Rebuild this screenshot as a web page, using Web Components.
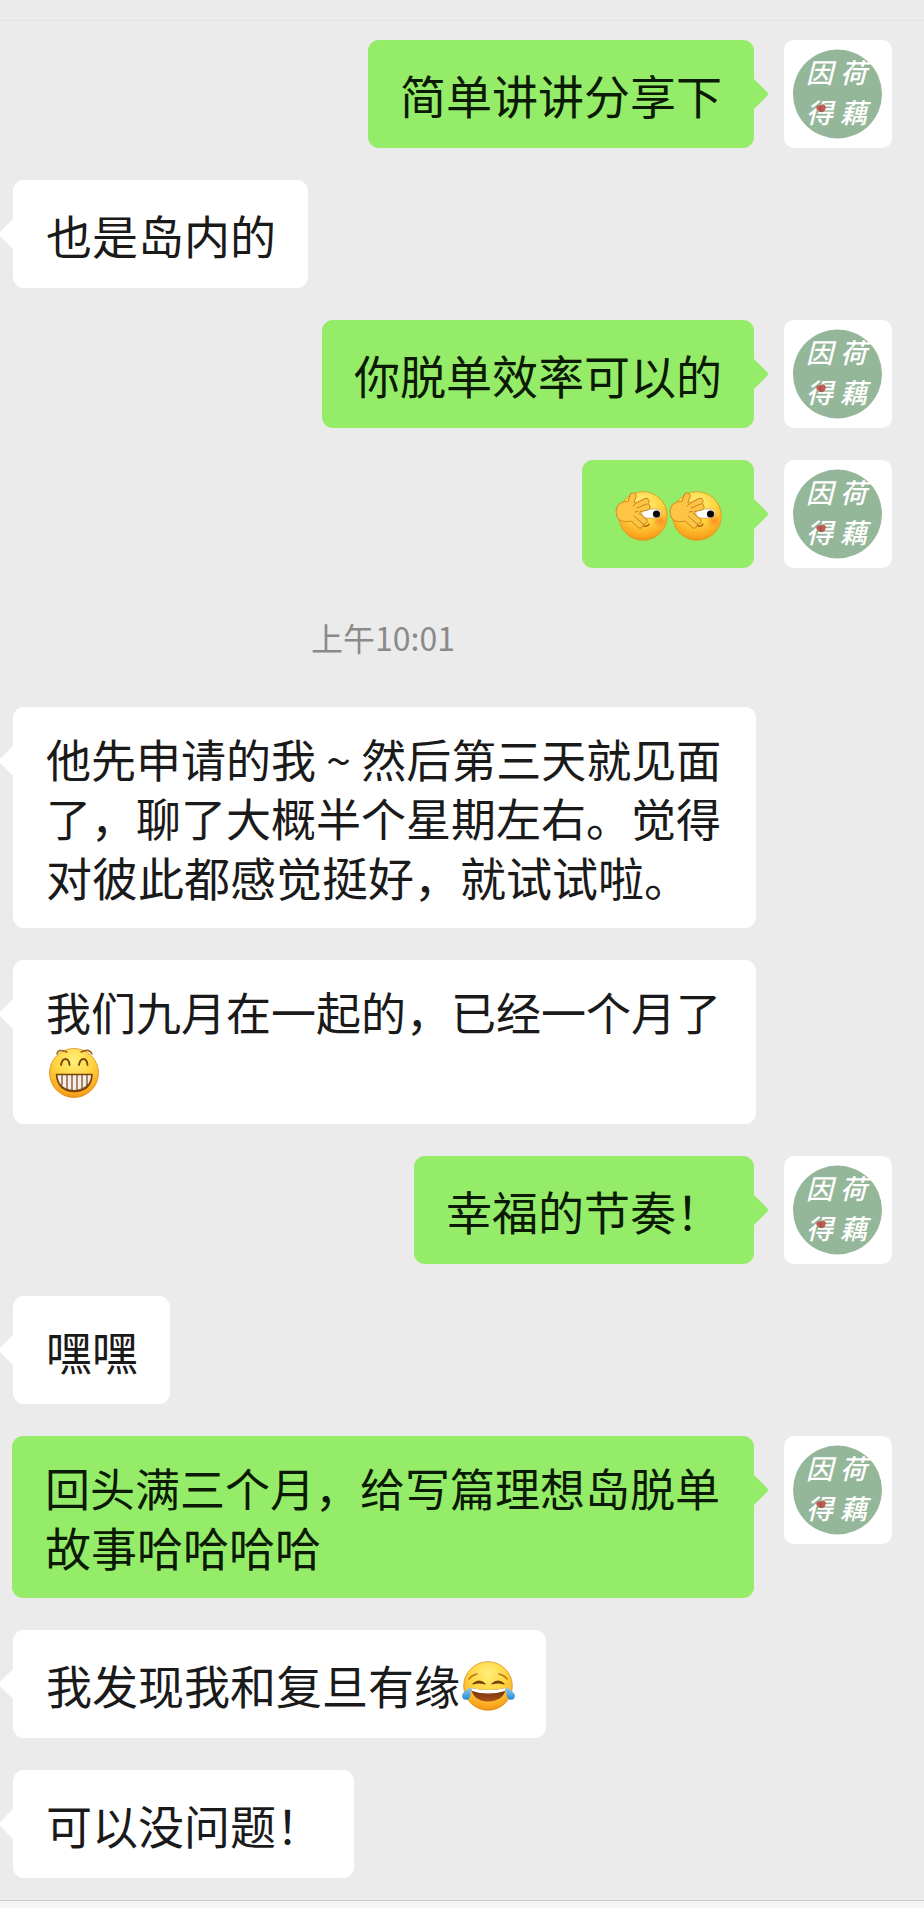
<!DOCTYPE html>
<html lang="zh-CN">
<head>
<meta charset="utf-8">
<meta name="viewport" content="width=device-width, initial-scale=1">
<title>聊天</title>
<style>
  body { margin: 0; background: #ebebeb; font-family: "Noto Sans CJK SC", sans-serif; }
</style>
</head>
<body>
<chat-page>
  <chat-message from="me"><chat-line>简单讲讲分享下</chat-line></chat-message>
  <chat-message><chat-line>也是岛内的</chat-line></chat-message>
  <chat-message from="me"><chat-line>你脱单效率可以的</chat-line></chat-message>
  <chat-message from="me"><chat-line><chat-emoji name="peek"></chat-emoji><chat-emoji name="peek"></chat-emoji></chat-line></chat-message>
  <chat-time>上午10:01</chat-time>
  <chat-message wide>
    <chat-line full>他先申请的我 ~ 然后第三天就见面</chat-line>
    <chat-line full>了，聊了大概半个星期左右。觉得</chat-line>
    <chat-line>对彼此都感觉挺好，就试试啦。</chat-line>
  </chat-message>
  <chat-message wide>
    <chat-line full>我们九月在一起的，已经一个月了</chat-line>
    <chat-line><chat-emoji name="grin"></chat-emoji></chat-line>
  </chat-message>
  <chat-message from="me"><chat-line>幸福的节奏！</chat-line></chat-message>
  <chat-message><chat-line>嘿嘿</chat-line></chat-message>
  <chat-message from="me" wide>
    <chat-line full>回头满三个月，给写篇理想岛脱单</chat-line>
    <chat-line>故事哈哈哈哈</chat-line>
  </chat-message>
  <chat-message><chat-line>我发现我和复旦有缘<chat-emoji name="joy"></chat-emoji></chat-line></chat-message>
  <chat-message><chat-line>可以没问题！</chat-line></chat-message>
</chat-page>

<script>
const define = (name, html, setup) => customElements.define(name, class extends HTMLElement {
  connectedCallback() {
    if (this.shadowRoot) return;
    const root = this.attachShadow({ mode: 'open' });
    const template = document.createElement('template');
    template.innerHTML = html;
    root.append(template.content.cloneNode(true));
    if (setup) setup(this, root);
  }
});

define('chat-page', `
  <style>
    :host { display: flex; flex-direction: column; min-height: 100vh; background: #ebebeb; }
    header { height: 20px; border-bottom: 1px solid #e3e3e3; }
    main { display: flex; flex-direction: column; gap: 32px; padding: 19px 32px 22px 12px; }
    footer { flex: 1; min-height: 7px; border-top: 1px solid #cdcdcd; background: #f5f5f5; }
  </style>
  <header></header>
  <main><slot></slot></main>
  <footer></footer>`);

define('chat-time', `
  <style>
    :host { display: block; padding-right: 138px; text-align: center; font-size: 32px; line-height: 75px; color: #8a8a8a; }
  </style>
  <slot></slot>`);

define('chat-line', `
  <style>
    :host { display: flex; align-items: center; min-height: 59px; font-size: 46px; line-height: 59px; }
    :host([full]) { font-size: 45px; }
  </style>
  <slot></slot>`);

define('chat-message', `
  <style>
    :host { display: flex; align-items: flex-start; gap: 30px; padding: 0 136px 0 1px; color: #1a1a1a; --bubble: #fff; }
    :host([from="me"]) { justify-content: flex-end; padding: 0; color: #0a1a05; --bubble: #95ec69; }
    .bubble {
      position: relative; box-sizing: border-box; min-height: 108px; padding: 22px 32px 22px 33px;
      display: flex; flex-direction: column; justify-content: center;
      border-radius: 11px; background: var(--bubble);
    }
    :host([from="me"]) .bubble { padding-left: 32px; }
    :host([wide]) .bubble { flex: 1; padding-left: 33px; }
    .tail { position: absolute; top: 39px; right: 100%; width: 14px; height: 30px; fill: var(--bubble); }
    :host([from="me"]) .tail { right: auto; left: 100%; }
    chat-avatar { display: none; }
    :host([from="me"]) chat-avatar { display: block; }
  </style>
  <div class="bubble">
    <svg class="tail" viewBox="0 0 14 30" aria-hidden="true"><path/></svg>
    <slot></slot>
  </div>
  <chat-avatar></chat-avatar>`, (host, root) => {
    root.querySelector('path').setAttribute('d', host.getAttribute('from') === 'me'
      ? 'M0 0L13 13Q15 15 13 17L0 30Z'
      : 'M14 0L1 13Q-1 15 1 17L14 30Z');
  });

define('chat-avatar', `
  <style>
    :host { display: block; flex: none; width: 108px; height: 108px; border-radius: 10px; background: #fff; overflow: hidden; }
    svg { display: block; }
    text { font: italic 500 27px "Noto Sans CJK SC", sans-serif; fill: #fff; }
  </style>
  <svg width="108" height="108" viewBox="0 0 108 108">
    <circle cx="53.5" cy="54" r="44.5" fill="#94b699"/>
    <text x="22" y="43">因</text>
    <text x="56" y="43">荷</text>
    <text x="22" y="83">得</text>
    <text x="56" y="83">藕</text>
    <path d="M32 68q1-4 4-2q4-4 6 1q-1 6-5 5q-3 0-5-4z" fill="#c45b57"/>
    <path d="M36 66l1 6" stroke="#8b4b45"/>
  </svg>`);

const faceFill = `
  <defs>
    <radialGradient id="face" cx=".5" cy=".25" r=".78">
      <stop offset="0" stop-color="#fff07a"/><stop offset=".5" stop-color="#ffd43f"/>
      <stop offset=".85" stop-color="#fba81f"/><stop offset="1" stop-color="#ea8b12"/>
    </radialGradient>
    <linearGradient id="mouth" x1="0" y1="0" x2="0" y2="1">
      <stop offset="0" stop-color="#6b2c08"/><stop offset="1" stop-color="#a8501a"/>
    </linearGradient>
    <linearGradient id="tear" x1="0" y1="0" x2="0" y2="1">
      <stop offset="0" stop-color="#8fd3f5"/><stop offset="1" stop-color="#2389d6"/>
    </linearGradient>
    <radialGradient id="blush"><stop offset="0" stop-color="#ff7a20" stop-opacity=".75"/><stop offset="1" stop-color="#ff8a20" stop-opacity="0"/></radialGradient>
  </defs>`;

const palm = 'M4 22Q8 17 16 18L24 20L26 28L21 35Q10 40 4 34Q1 28 4 22Z';
const emoji = {
  peek: ['捂脸偷看', `
    <circle cx="29" cy="32" r="24.3" fill="url(#face)" stroke="#df9420" stroke-width=".8"/>
    <ellipse cx="46" cy="37" rx="8" ry="7" fill="url(#blush)"/>
    <path d="M28 25h14q5 0 5 4.500q0 4.500-5 4.500H28z" fill="#fff" stroke="#c99c62" stroke-width=".7"/>
    <circle cx="42.500" cy="30" r="3.600" fill="#080808"/>
    <path d="M30 42q4 1 5-2" fill="none" stroke="#a85c12" stroke-width="1.300" stroke-linecap="round"/>
    <g fill="none" stroke-linecap="round" stroke-linejoin="round">
      <path d="M15 24L19 12M19 24L32 17.500M20 26L33 23M19 28L30 37M15 31L26 41" stroke="#c9821c" stroke-width="7"/>
      <path d="${palm}" fill="#c9821c" stroke="#c9821c" stroke-width="1.600"/>
      <path d="M15 24L19 12M19 24L32 17.500M20 26L33 23M19 28L30 37M15 31L26 41" stroke="#fdc445" stroke-width="5.200"/>
      <path d="${palm}" fill="#fdc445"/>
      <path d="M22 19.500L19 22M32 20.200L23 24M24 27.500L21 28M28 39L20 32" stroke="#c9821c" stroke-width="1"/>
    </g>`],
  grin: ['呲牙', `
    <circle cx="28" cy="32" r="24.500" fill="url(#face)" stroke="#d99122" stroke-width=".8"/>
    <path d="M11 13Q12 7 21 11M35 11Q43 7 46 13" fill="none" stroke="#9a6016" stroke-width="1.500" stroke-linecap="round"/>
    <path d="M15 24q1-6 4.500-6t4 6M33 24q1-6 4.500-6t4 6" fill="none" stroke="#79450e" stroke-width="1.800" stroke-linecap="round"/>
    <path d="M10.500 33.500H46Q45 50 28 50.500Q12 50 10.500 33.500Z" fill="#f7ede8" stroke="#744008" stroke-width="1.700" stroke-linejoin="round"/>
    <path d="M16 34v10M21 34v14M26 34v16M31 34v16M36 34v14M41 34v10" stroke="#80502a" stroke-width="1.300"/>
    <path d="M14 43Q18 49 28 49.500Q38 49 42 43" fill="none" stroke="#744008" stroke-width="1"/>`],
  joy: ['笑哭', `
    <circle cx="28" cy="32" r="24.300" fill="url(#face)" stroke="#d99122" stroke-width=".8"/>
    <path d="M9 25q3-4 8-5M39 20q5 1 8 5" fill="none" stroke="#b87617" stroke-width="1.500" stroke-linecap="round"/>
    <path d="M13 30q6-6 12 0q-6-2-12 0zM32 30q6-6 12 0q-6-2-12 0z" fill="#754008" stroke="#754008" stroke-width="1.200" stroke-linejoin="round"/>
    <path d="M11 34Q28 38 46 34Q44 47 28 47.500Q13 47 11 34Z" fill="url(#mouth)"/>
    <path d="M11 34Q28 38 46 34L45 37Q28 42 12 37Z" fill="#fff"/>
    <path d="M11 33q-9 5-9 9q1 5 6 3.500q3-1 3-12.500zM46 33q9 5 9 9q-1 5-6 3.500q-3-1-3-12.500z" fill="url(#tear)"/>`]
};

define('chat-emoji', `
  <style>
    :host { display: block; flex: none; width: 54px; height: 61px; }
    svg { display: block; overflow: visible; }
  </style>
  <svg width="54" height="61" viewBox="0 0 54 61" role="img"></svg>`, (host, root) => {
    const [label, art] = emoji[host.getAttribute('name')];
    const svg = root.querySelector('svg');
    svg.setAttribute('aria-label', label);
    svg.innerHTML = faceFill + art;
  });
</script>
</body>
</html>
